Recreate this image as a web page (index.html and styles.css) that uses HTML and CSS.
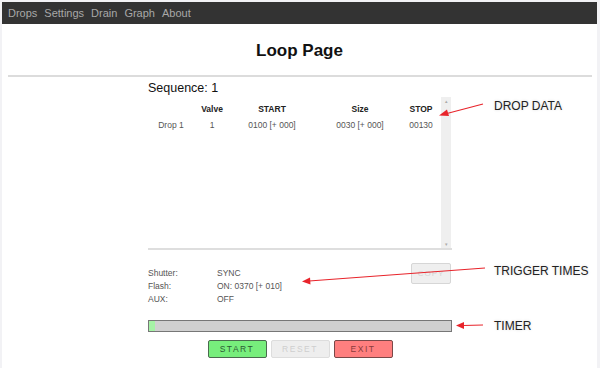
FILE: index.html
```html
<!DOCTYPE html>
<html lang="en">
<head>
  <meta charset="UTF-8" />
  <title>Loop Page</title>
  <link rel="stylesheet" href="styles.css">
</head>
<body>
  <div class="page">
    <nav class="topnav">
      <a href="#">Drops</a>
      <a href="#">Settings</a>
      <a href="#">Drain</a>
      <a href="#">Graph</a>
      <a href="#">About</a>
    </nav>

    <h1>Loop Page</h1>
    <hr class="rule" />

    <div class="main">
      <div class="sequence">Sequence: 1</div>

      <div class="dropbox">
        <div class="drops">
          <div class="row head">
            <span></span><span>Valve</span><span>START</span><span>Size</span><span>STOP</span>
          </div>
          <div class="row">
            <span>Drop 1</span><span>1</span><span>0100 [+ 000]</span><span>0030 [+ 000]</span><span>00130</span>
          </div>
        </div>
        <div class="scrollbar">
          <span class="arrow">&#9652;</span>
          <span class="arrow">&#9662;</span>
        </div>
      </div>

      <div class="trigger">
        <div class="times">
          <span>Shutter:</span><span>SYNC</span>
          <span>Flash:</span><span>ON: 0370 [+ 010]</span>
          <span>AUX:</span><span>OFF</span>
        </div>
        <button class="copy" disabled>COPY</button>
      </div>

      <div class="timer"><div class="fill" style="width: 6px"></div></div>

      <div class="controls">
        <button class="btn start">START</button>
        <button class="btn reset" disabled>RESET</button>
        <button class="btn exit">EXIT</button>
      </div>
    </div>

    <!-- annotations drawn over the screenshot -->
    <svg class="arrows" width="600" height="368">
      <g stroke="#e8242b" stroke-width="1.2" fill="#e8242b">
        <line x1="483" y1="104" x2="445" y2="114" />
        <polygon points="439,115.5 447,109.5 449,116" stroke="none" />
        <line x1="485" y1="268" x2="309" y2="281" />
        <polygon points="302,281.5 310,277.5 310.5,284.5" stroke="none" />
        <line x1="483" y1="325" x2="463" y2="325.5" />
        <polygon points="456,325.5 464,322 464,329" stroke="none" />
      </g>
    </svg>
    <div class="note note-drop">DROP DATA</div>
    <div class="note note-trigger">TRIGGER TIMES</div>
    <div class="note note-timer">TIMER</div>
  </div>
</body>
</html>
```

FILE: styles.css
```css
body {
  margin: 0;
  background-color: #f2f2f5;
  font-family: "Liberation Sans", Arial, sans-serif;
  color: #222;
}

.page {
  position: relative;
  margin: 2px 3px 0 2px;
  height: 366px;
  background-color: #ffffff;
}

.topnav {
  display: flex;
  height: 22px;
  align-items: center;
  padding-left: 6px;
  background-color: #333333;
}

.topnav a {
  color: #a8a8a8;
  text-decoration: none;
  font-size: 11px;
  margin-right: 7px;
}

h1 {
  margin: 0;
  padding-top: 17px;
  text-align: center;
  font-size: 17px;
  line-height: 20px;
  color: #111;
}

.rule {
  margin: 14px 5px 0 6px;
  border: none;
  height: 2px;
  background-color: #dcdcdc;
}

.main {
  width: 304px;
  margin: 0 auto;
  padding-left: 1px;
}

.sequence {
  margin-top: 3px;
  font-size: 12.5px;
  line-height: 16px;
  color: #111;
}

.dropbox {
  display: flex;
  height: 152px;
  border-bottom: 2px solid #dedede;
}

.drops {
  flex: 1;
  padding-top: 5px;
}

.row {
  display: grid;
  grid-template-columns: 46px 36px 84px 92px 30px;
  font-size: 8.5px;
  line-height: 16px;
  color: #555;
  text-align: center;
}

.row.head {
  font-weight: bold;
  color: #222;
}

.scrollbar {
  width: 10px;
  margin-top: 1px;
  margin-right: 1px;
  display: flex;
  flex-direction: column;
  justify-content: space-between;
  background-color: #efefef;
}

.scrollbar .arrow {
  font-size: 5px;
  line-height: 8px;
  color: #aaa;
  text-align: center;
}

.trigger {
  display: flex;
  justify-content: space-between;
  margin-top: 13px;
  padding-right: 1px;
}

.times {
  display: grid;
  grid-template-columns: 69px auto;
  padding-top: 4px;
  font-size: 8.5px;
  line-height: 13px;
  color: #555;
}

.copy {
  width: 40px;
  height: 21px;
  padding: 0;
  font-family: inherit;
  font-size: 8px;
  letter-spacing: 1px;
  color: #d4d4d4;
  background-color: #efefef;
  border: 1px solid #d6d6d6;
  border-radius: 2px;
}

.timer {
  margin-top: 14px;
  height: 10px;
  border: 1px solid #777;
  background-color: #d0d0d0;
}

.timer .fill {
  height: 100%;
  background-color: #a6f3a6;
}

.controls {
  display: flex;
  justify-content: center;
  gap: 4px;
  margin-top: 8px;
}

.btn {
  width: 59px;
  height: 18px;
  padding: 0;
  font-family: inherit;
  font-size: 8.5px;
  letter-spacing: 1.5px;
  border-radius: 2px;
}

.start {
  background-color: #77ee7c;
  color: #2d5a35;
  border: 1px solid #4a6a4e;
}

.reset {
  background-color: #eeeeee;
  color: #cfcfcf;
  border: 1px solid #dddddd;
}

.exit {
  background-color: #ff7f7f;
  color: #8a3b3b;
  border: 1px solid #7a4848;
}

.arrows {
  position: absolute;
  left: -2px;
  top: -2px;
  pointer-events: none;
}

.note {
  position: absolute;
  left: 492px;
  font-size: 12px;
  color: #222;
  text-shadow: 0 0 3px #d8d8d8;
}

.note-drop { top: 97px; }
.note-trigger { top: 262px; }
.note-timer { top: 317px; }
```
